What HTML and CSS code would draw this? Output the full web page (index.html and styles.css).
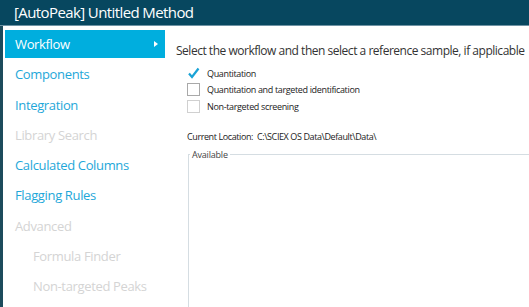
FILE: index.html
```html
<!DOCTYPE html>
<html>
<head>
<meta charset="utf-8">
<link rel="stylesheet" href="styles.css">
</head>
<body>
<div class="window">
  <div class="titlebar">[AutoPeak] Untitled Method</div>
  <div class="main">
    <nav class="sidebar">
      <div class="item selected">Workflow<span class="arrow"></span></div>
      <div class="item">Components</div>
      <div class="item">Integration</div>
      <div class="item disabled">Library Search</div>
      <div class="item">Calculated Columns</div>
      <div class="item">Flagging Rules</div>
      <div class="item disabled">Advanced</div>
      <div class="item disabled sub">Formula Finder</div>
      <div class="item disabled sub">Non-targeted Peaks</div>
    </nav>
    <section class="content">
      <div class="heading">Select the workflow and then select a reference sample, if applicable</div>
      <div class="checks">
        <div class="check"><span class="box"><svg width="13" height="13" viewBox="0 0 13 13"><path d="M2 6.5 L5 10 L11.5 1.5" fill="none" stroke="#1aa3d6" stroke-width="2.2"/></svg></span>Quantitation</div>
        <div class="check"><span class="box bordered"></span>Quantitation and targeted identification</div>
        <div class="check"><span class="box bordered light"></span>Non-targeted screening</div>
      </div>
      <div class="location">Current Location:&nbsp; C:\SCIEX OS Data\Default\Data\</div>
      <fieldset class="group">
        <legend>Available</legend>
      </fieldset>
    </section>
  </div>
</div>
</body>
</html>
```
FILE: styles.css
```css
* { box-sizing: border-box; }
html, body { margin: 0; padding: 0; background: #fff; }
body { font-family: "Open Sans", "Noto Sans", sans-serif; width: 529px; height: 307px; overflow: hidden; }
.window { display: flex; flex-direction: column; height: 307px; }
.titlebar {
  height: 26px;
  background: #07475f;
  color: #fff;
  font-size: 15px;
  padding: 2px 0 0 14px;
  line-height: 20px;
  letter-spacing: -0.6px;
  border-bottom: 1px solid #6f93a4;
  box-shadow: inset 0 -1px 0 #07475f;
}
.main { flex: 1; display: flex; border-left: 3px solid #1d4b5c; padding-top: 4px; }
.sidebar { width: 162px; flex: none; padding-left: 2px; }
.item {
  height: 30.25px;
  line-height: 28px;
  font-size: 13px;
  color: #1ea7d9;
  padding-left: 10px;
  position: relative;
  letter-spacing: -0.35px;
}
.item.selected { background: #00aede; color: #fff; height: 28px; margin-bottom: 2.25px; }
.item.disabled { color: #d4d4d4; }
.item.sub { padding-left: 28px; }
.arrow {
  position: absolute; right: 7px; top: 11px;
  width: 0; height: 0;
  border-left: 4px solid #fff; border-top: 3.5px solid transparent; border-bottom: 3.5px solid transparent;
}
.content { flex: 1; padding: 13px 0 0 11px; display: flex; flex-direction: column; min-width: 0; }
.heading { font-size: 12px; color: #333; white-space: nowrap; letter-spacing: -0.48px; line-height: 16px; }
.checks { padding: 7px 0 0 11px; display: flex; flex-direction: column; gap: 2.5px; }
.check { display: flex; align-items: center; font-size: 9px; color: #222; height: 14px; letter-spacing: -0.35px; }
.box { width: 13px; height: 13px; margin-right: 7px; display: inline-block; flex: none; }
.box.bordered { border: 1px solid #a9a9a9; }
.box.bordered.light { border-color: #d0d0d0; }
.location { font-size: 9px; color: #222; padding: 17px 0 0 11px; letter-spacing: -0.4px; white-space: nowrap; }
.group {
  margin: 5px 0 0 12px;
  padding: 0;
  border: 1px solid #d5dde2;
  border-right: none; border-bottom: none;
  flex: 1;
}
.group legend { font-size: 9px; color: #444; padding: 0 2px; margin-left: 1px; letter-spacing: -0.2px; }
```
